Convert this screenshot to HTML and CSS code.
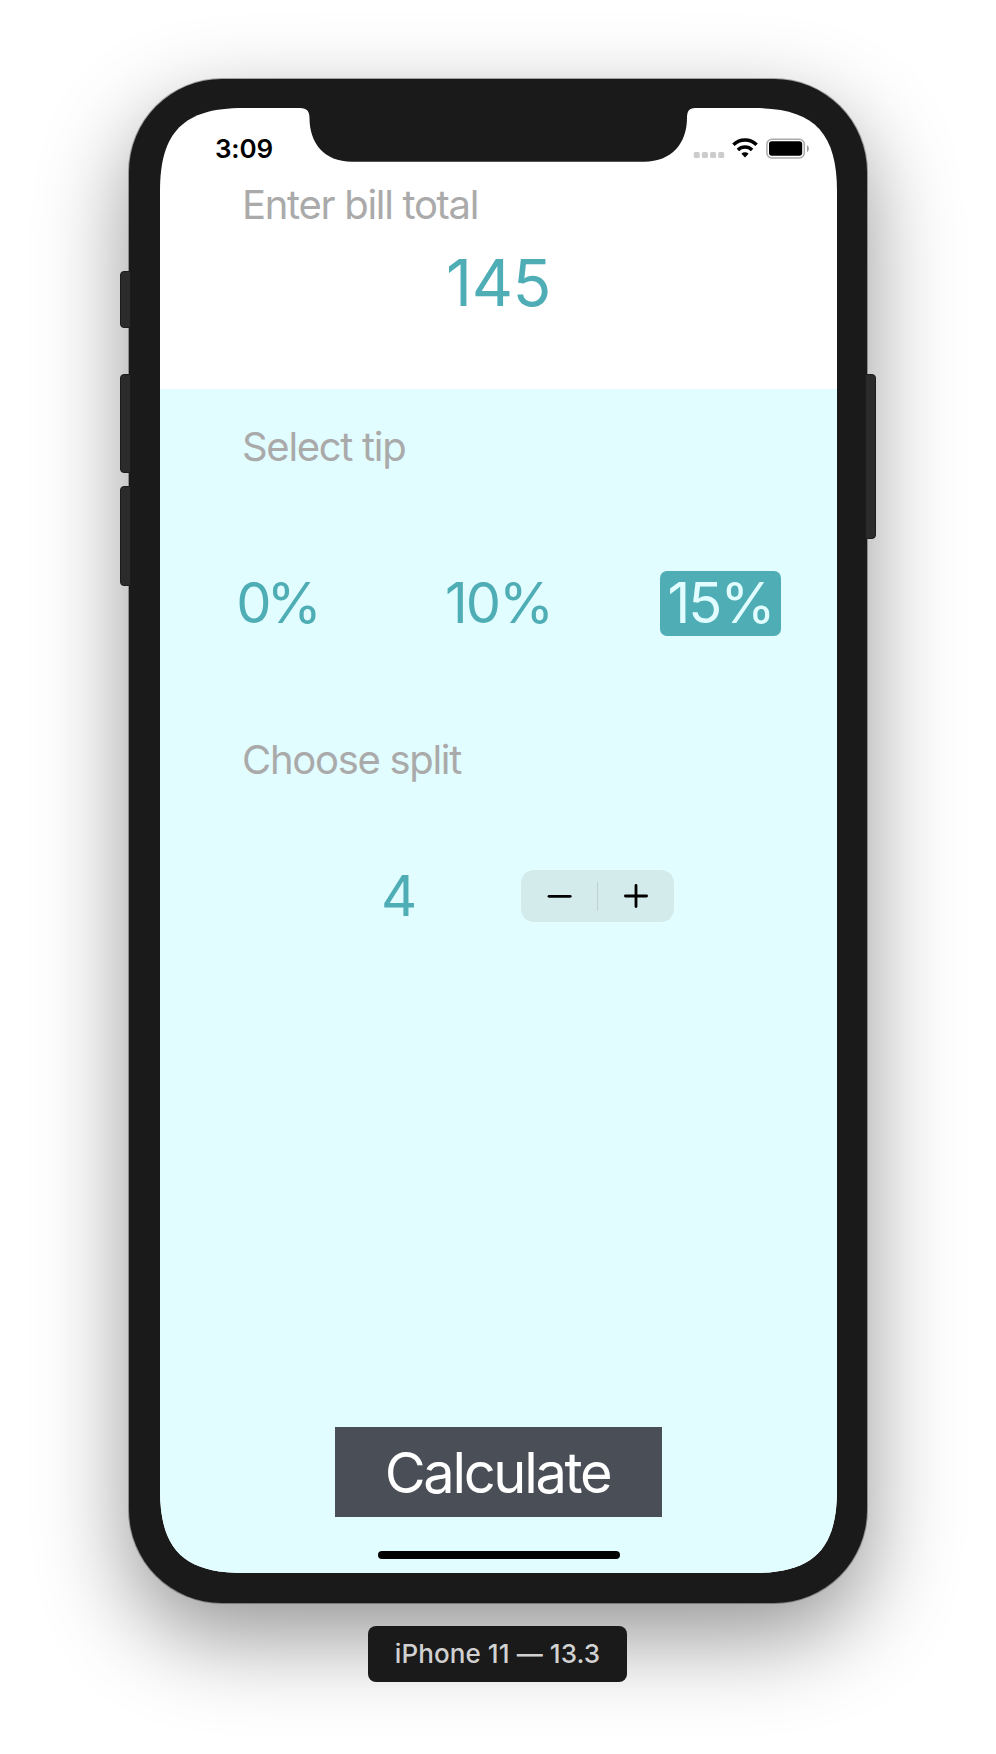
FILE: index.html
```
<!DOCTYPE html>
<html lang="en">
<head>
<meta charset="utf-8">
<title>Tip calculator</title>
<link rel="stylesheet" href="styles.css">
</head>
<body>
<div class="phone">
  <span class="side-button mute"></span>
  <span class="side-button volume-up"></span>
  <span class="side-button volume-down"></span>
  <span class="side-button power"></span>
  <main class="screen">
    <header class="status-bar">
      <span class="time">3:09</span>
      <svg class="notch" width="395" height="54" viewBox="0 0 395 54"><path d="M0 0C7 0 9.5 3.5 9.5 10C9.5 35 24 53.7 52 53.7H344C372 53.7 387 35 387 10C387 3.5 389 0 395 0Z" fill="#1a1a1a"/></svg>
      <svg class="indicators" width="118" height="24" viewBox="0 0 118 24">
        <g fill="#ccc"><rect x="1.7" y="16" width="6" height="6" rx="1.5"/><rect x="9.9" y="16" width="6" height="6" rx="1.5"/><rect x="18.1" y="16" width="6" height="6" rx="1.5"/><rect x="26.2" y="16" width="6" height="6" rx="1.5"/></g>
        <g fill="none" stroke="#000" stroke-width="3.4"><path d="M41.4 8.8A16.6 16.6 0 0 1 64.6 8.8"/><path d="M45.9 14A10 10 0 0 1 60.1 14"/></g>
        <path d="M49.4 17.7A5.2 5.2 0 0 1 56.6 17.7L53 21.6Z"/>
        <rect x="74.9" y="3.2" width="37.4" height="18.7" rx="5" fill="none" stroke="#a9a9a9" stroke-width="1.5"/>
        <rect x="77" y="5.3" width="33.2" height="14.5" rx="2.8"/>
        <path d="M115 9.3C117.4 10.2 117.4 15.2 115 16Z" fill="#999"/>
      </svg>
    </header>
    <section class="bill">
      <h2 class="label">Enter bill total</h2>
      <p class="amount">145</p>
    </section>
    <section class="settings">
      <h2 class="label">Select tip</h2>
      <div class="tips">
        <span class="tip zero">0%</span>
        <span class="tip ten">10%</span>
        <span class="tip selected">15%</span>
      </div>
      <h2 class="label choose">Choose split</h2>
      <div class="split">
        <span class="people">4</span>
        <div class="stepper">
          <svg width="76" height="52" viewBox="0 0 76 52"><path d="M28 26.3H49.2" stroke="#000" stroke-width="2.8" stroke-linecap="round"/></svg>
          <span class="divider"></span>
          <svg width="76" height="52" viewBox="0 0 76 52"><path d="M27.4 26H48.6M38 15.4V36.6" stroke="#000" stroke-width="2.8" stroke-linecap="round"/></svg>
        </div>
      </div>
      <div class="calculate">Calculate</div>
      <span class="home-bar"></span>
    </section>
  </main>
</div>
<div class="device-name">iPhone 11 — 13.3</div>
</body>
</html>
```
FILE: styles.css
```
* { box-sizing: border-box; }
body {
  margin: 0;
  height: 1754px;
  padding-top: 79px;
  background: #fff;
  font-family: Inter, "Liberation Sans", sans-serif;
  overflow: hidden;
}
h2, p { margin: 0; font-weight: 400; }
.phone {
  position: relative;
  width: 738px;
  height: 1524px;
  margin-left: 129px;
  padding: 29px 30px 30px 31px;
  background: #1a1a1a;
  border-radius: 93px;
  box-shadow: 0 0 0 1px rgba(0,0,0,.3), 0 34px 90px rgba(0,0,0,.42);
}
.side-button {
  position: absolute;
  left: -9.5px;
  width: 11px;
  background: #2b2b2b;
  border: 1px solid #1c1c1c;
  border-radius: 4px 0 0 4px;
}
.mute { top: 192px; height: 57px; }
.volume-up { top: 295px; height: 99px; }
.volume-down { top: 407px; height: 100px; }
.power { top: 295px; height: 165px; left: 736px; border-radius: 0 4px 4px 0; }
.screen {
  width: 677px;
  height: 1465px;
  background: #fff;
  clip-path: path("M0 83C0 23.8 23.8 0 83 0H594C653.2 0 677 23.8 677 83V1382C677 1441.2 653.2 1465 594 1465H83C23.8 1465 0 1441.2 0 1382Z");
}
.status-bar {
  display: flex;
  height: 54px;
}
.time {
  width: 140px;
  padding: 25px 0 0 55px;
  font-size: 26px;
  line-height: 31px;
  font-weight: 600;
  letter-spacing: -.2px;
}
.notch { flex: none; }
.indicators { flex: none; margin: 28px 0 0 -3px; }
.bill { height: 227px; padding-top: 19px; }
.label {
  padding-left: 82px;
  color: #aaa;
  font-size: 40px;
  line-height: 48px;
  letter-spacing: -1.3px;
}
.amount {
  padding-top: 16px;
  text-align: center;
  color: #4eadb5;
  font-size: 64px;
  line-height: 76px;
  letter-spacing: -.5px;
}
.settings {
  display: flex;
  flex-direction: column;
  height: 1184px;
  padding-top: 34px;
  background: #e2fdff;
}
.tips {
  display: flex;
  height: 65px;
  margin-top: 100px;
  color: #4eadb5;
  font-size: 56px;
  line-height: 64px;
  letter-spacing: -2px;
}
.tip { text-align: center; white-space: nowrap; }
.zero { width: 121px; margin-left: 56px; letter-spacing: -5px; }
.ten { width: 121px; margin-left: 101px; }
.selected {
  width: 121px;
  height: 65px;
  margin-left: 101px;
  border-radius: 7px;
  background: #4eadb5;
  color: #e2fdff;
}
.choose { margin-top: 100px; }
.split { display: flex; height: 68px; margin-top: 78px; align-items: center; }
.people {
  width: 140px;
  margin-left: 221px;
  color: #4eadb5;
  font-size: 56px;
  line-height: 68px;
}
.stepper {
  display: flex;
  align-items: center;
  width: 153px;
  height: 52px;
  border-radius: 13px;
  background: #d4ebec;
}
.divider { width: 1px; height: 29px; background: #bdd1d3; }
.calculate {
  width: 327px;
  height: 90px;
  margin: 497px 0 0 175px;
  padding-right: 2px;
  background: #4a4e57;
  color: #fff;
  font-size: 56px;
  line-height: 92px;
  text-align: center;
  letter-spacing: -2.3px;
}
.home-bar {
  width: 242px;
  height: 8px;
  margin: 34px 0 0 217.5px;
  border-radius: 4px;
  background: #000;
}
.device-name {
  position: relative;
  width: 259px;
  height: 56px;
  margin: 23px 0 0 368px;
  border-radius: 8px;
  background: #1a1a1a;
  color: #d1d1d1;
  font-size: 26px;
  font-weight: 500;
  line-height: 55px;
  text-align: center;
  letter-spacing: .1px;
}
```
